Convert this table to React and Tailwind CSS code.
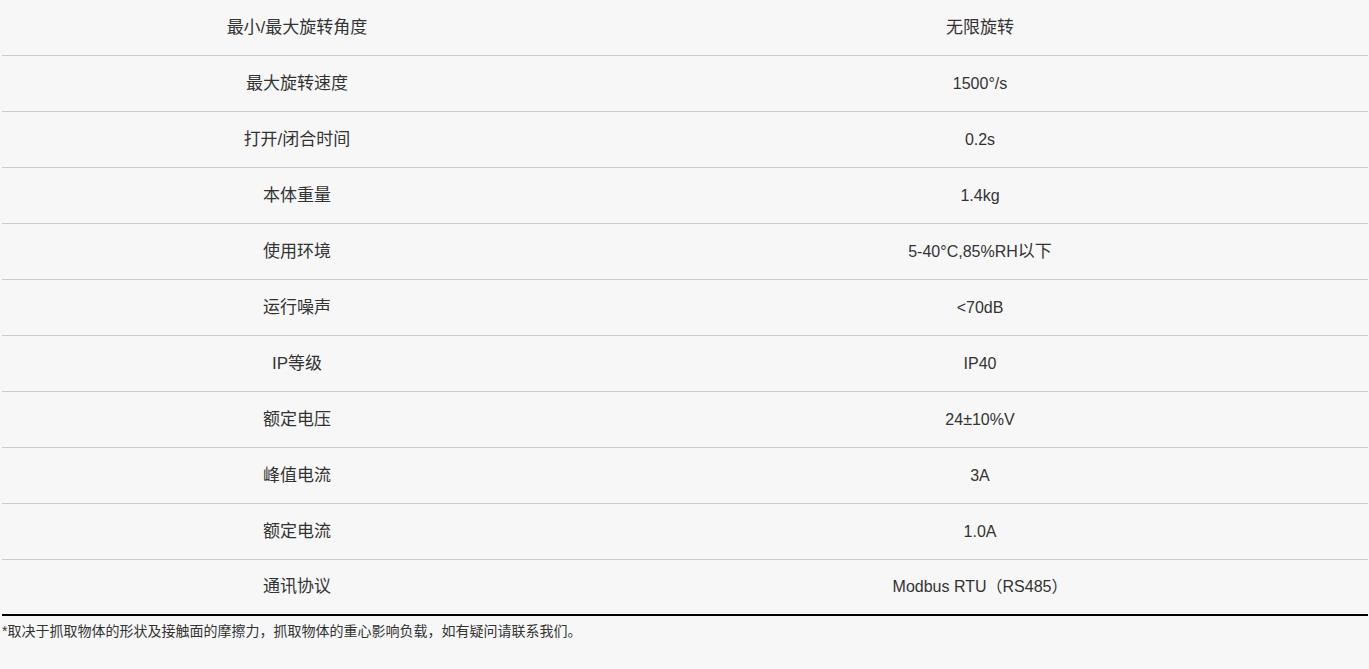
/**
 * SpecTable
 *
 * Product parameters as a two-column table with a footnote.
 */

const specs = [
  ['最小/最大旋转角度', <span className="text-[17px]">无限旋转</span>],
  ['最大旋转速度', '1500°/s'],
  ['打开/闭合时间', '0.2s'],
  ['本体重量', '1.4kg'],
  ['使用环境', <>5-40°C,85%RH<span className="text-[17px]">以下</span></>],
  ['运行噪声', '<70dB'],
  ['IP等级', 'IP40'],
  ['额定电压', '24±10%V'],
  ['峰值电流', '3A'],
  ['额定电流', '1.0A'],
  ['通讯协议', 'Modbus RTU（RS485）'],
];

export default function App() {
  return (
    <div
      className="min-h-[669px] bg-[#f7f7f7] px-[2px] text-[#333333]"
      style={{ fontFamily: '"Liberation Sans", Arial, "Noto Sans CJK SC", sans-serif' }}
    >
      {/* Table */}
      <div className="w-[1366px] border-b-2 border-black">
        {specs.map(([label, value], i) => {
          const last = i === specs.length - 1;
          return (
            <div
              key={label}
              className={
                last
                  ? 'flex h-[54px] items-center text-[16px]'
                  : 'flex h-[56px] items-center border-b border-[#cccccc] text-[16px]'
              }
            >
              <div className="w-[590px] text-center text-[17px]">{label}</div>
              <div className="flex-1 text-center">{value}</div>
            </div>
          );
        })}
      </div>

      {/* Footnote */}
      <p className="mt-[5px] text-[14px] leading-[20px]">
        *取决于抓取物体的形状及接触面的摩擦力，抓取物体的重心影响负载，如有疑问请联系我们。
      </p>
    </div>
  );
}
